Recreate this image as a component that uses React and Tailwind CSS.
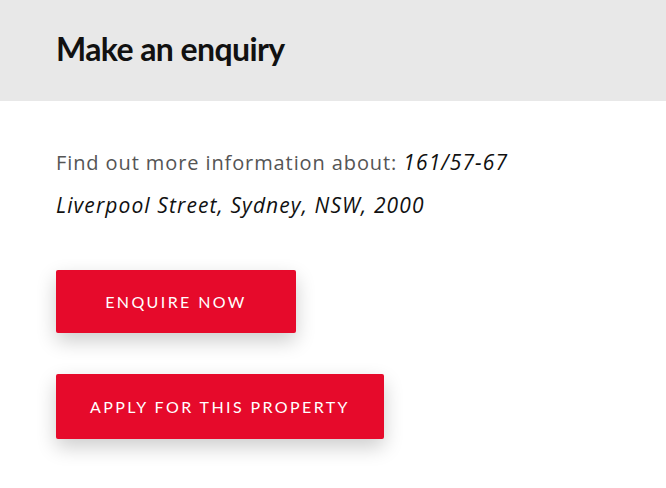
export default function App() {
    return (
        <div className="w-[666px] h-[488px] bg-white overflow-hidden" style={{ fontFamily: 'Lato, "Open Sans", sans-serif' }}>
            <div className="h-[101px] bg-[#e8e8e8] flex items-center px-14 pb-[3px]">
                <h2 className="text-[32px] font-bold text-[#111] tracking-[-0.6px] leading-none">Make an enquiry</h2>
            </div>

            <div className="px-14 pt-[40px]">
                <p className="text-[20px] leading-[42px] tracking-[0.9px] text-[#555] max-w-[460px]" style={{ fontFamily: '"Open Sans", sans-serif' }}>
                    Find out more information about: <em className="text-[21px] leading-[42px] text-[#111] font-medium tracking-[1.1px]">161/57-67 Liverpool Street, Sydney, NSW, 2000</em>
                </p>

                <div className="flex flex-col items-start gap-[41px] mt-[43px]">
                    <button className="min-w-[240px] h-[63px] px-[34px] bg-[#e60a2b] text-white text-[16px] tracking-[2.4px] rounded-[2px] shadow-[0_8px_20px_rgba(0,0,0,0.2)]">
                        ENQUIRE NOW
                    </button>
                    <button className="h-[65px] px-[34px] bg-[#e60a2b] text-white text-[16px] tracking-[2.4px] rounded-[2px] shadow-[0_8px_20px_rgba(0,0,0,0.2)]">
                        APPLY FOR THIS PROPERTY
                    </button>
                </div>
            </div>
        </div>
    )
}
